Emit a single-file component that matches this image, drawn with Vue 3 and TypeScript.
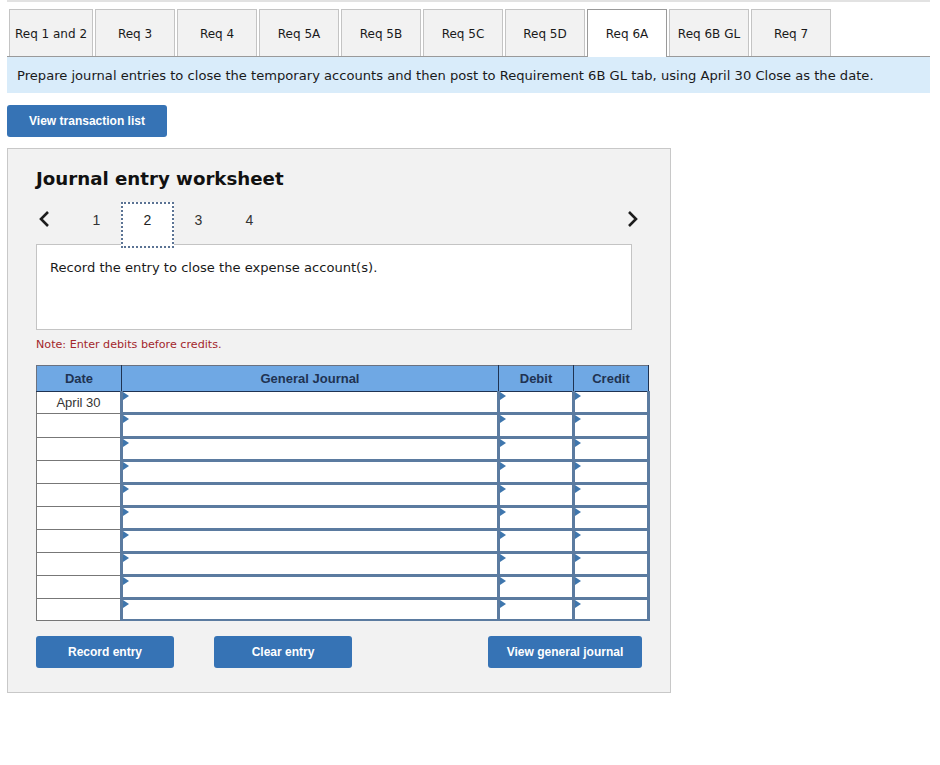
<script setup lang="ts">
const tabs = ['Req 1 and 2', 'Req 3', 'Req 4', 'Req 5A', 'Req 5B', 'Req 5C', 'Req 5D', 'Req 6A', 'Req 6B GL', 'Req 7']
const activeTab = 'Req 6A'
const steps = [1, 2, 3, 4]

// First row carries the date, the other nine are blank
const rows = Array.from({ length: 10 }, (_, i) => (i === 0 ? 'April 30' : ''))
</script>

<template>
  <div class="page">
    <div class="top-strip"></div>

    <div class="tabs">
      <div
        v-for="(tab, i) in tabs"
        :key="tab"
        class="tab"
        :class="{ active: tab === activeTab, first: i === 0 }"
      >
        {{ tab }}
      </div>
    </div>

    <div class="instruction">
      Prepare journal entries to close the temporary accounts and then post to Requirement 6B GL tab, using April 30 Close as the date.
    </div>

    <button class="btn btn-list">View transaction list</button>

    <div class="panel">
      <h2 class="title">Journal entry worksheet</h2>

      <div class="stepper">
        <svg class="chevron" width="12" height="18" viewBox="0 0 12 18">
          <path d="M10 2 L3 9 L10 16" fill="none" stroke="#1c1c1c" stroke-width="2.6" />
        </svg>
        <div class="steps">
          <div v-for="s in steps" :key="s" class="step" :class="{ current: s === 2 }">{{ s }}</div>
        </div>
        <svg class="chevron next" width="12" height="18" viewBox="0 0 12 18">
          <path d="M2 2 L9 9 L2 16" fill="none" stroke="#1c1c1c" stroke-width="2.6" />
        </svg>
      </div>

      <div class="prompt">Record the entry to close the expense account(s).</div>

      <div class="note">Note: Enter debits before credits.</div>

      <table class="journal">
        <colgroup>
          <col class="col-date" />
          <col class="col-desc" />
          <col class="col-num" />
          <col class="col-num" />
        </colgroup>
        <thead>
          <tr>
            <th>Date</th>
            <th>General Journal</th>
            <th>Debit</th>
            <th>Credit</th>
          </tr>
        </thead>
        <tbody>
          <tr v-for="(date, i) in rows" :key="i">
            <td class="date">{{ date }}</td>
            <td class="entry"><span class="marker"></span></td>
            <td class="entry"><span class="marker"></span></td>
            <td class="entry"><span class="marker"></span></td>
          </tr>
        </tbody>
      </table>

      <div class="actions">
        <button class="btn btn-action">Record entry</button>
        <button class="btn btn-action btn-clear">Clear entry</button>
        <button class="btn btn-journal">View general journal</button>
      </div>
    </div>
  </div>
</template>

<style>
html,
body {
  background: #fff;
}
</style>

<style scoped>
.page {
  width: 940px;
  height: 765px;
  box-sizing: border-box;
  padding: 0 10px 0 7px;
  font-family: "DejaVu Sans", Verdana, sans-serif;
  color: #1a1a1a;
}

.top-strip {
  height: 2px;
  background: #e2e2e2;
}

.tabs {
  display: flex;
  gap: 2px;
  padding: 7px 0 0 2px;
  height: 47px;
  border-bottom: 1px solid #9a9a9a;
}

.tab {
  width: 80px;
  height: 47px;
  box-sizing: border-box;
  display: flex;
  align-items: center;
  justify-content: center;
  padding-top: 1px;
  background: #f2f2f2;
  border: 1px solid #c4c4c4;
  border-bottom: none;
  font-size: 12px;
  white-space: nowrap;
}

.tab.first {
  width: 84px;
}

.tab.active {
  height: 48px;
  padding-top: 0;
  background: #fff;
  border-color: #9a9a9a;
  position: relative;
}

.instruction {
  height: 36px;
  display: flex;
  align-items: center;
  padding-left: 10px;
  background: #d9ecfa;
  font-size: 13.1px;
  white-space: nowrap;
}

.btn {
  display: block;
  border: none;
  border-radius: 3px;
  background: #3673b5;
  color: #fff;
  font-family: "Liberation Sans", Arial, sans-serif;
  font-size: 12px;
  font-weight: 700;
  padding: 0;
}

.btn-list {
  width: 160px;
  height: 32px;
  margin-top: 12px;
}

.panel {
  width: 664px;
  height: 545px;
  box-sizing: border-box;
  margin-top: 11px;
  padding: 0 0 0 28px;
  background: #f2f2f2;
  border: 1px solid #c8c8c8;
}

.title {
  margin: 18px 0 0;
  font-size: 18.2px;
  line-height: 24px;
  font-weight: 700;
  color: #111;
}

.stepper {
  width: 596px;
  height: 46px;
  margin-top: 11px;
  display: flex;
  align-items: center;
  position: relative;
  z-index: 1;
}

.chevron {
  margin: -12px 0 0 2px;
  flex: none;
}

.chevron.next {
  margin-left: auto;
  margin-right: -7px;
}

.steps {
  display: flex;
  margin-left: 21px;
  margin-right: auto;
  font-family: "Liberation Sans", Arial, sans-serif;
  font-size: 14px;
  color: #333;
}

.step {
  width: 51px;
  height: 46px;
  box-sizing: border-box;
  display: flex;
  align-items: center;
  justify-content: center;
  padding-bottom: 11px;
}

.step.current {
  width: 53px;
  margin: 0 -1px;
  background: #fff;
  border: 2px dotted #5b7394;
  padding-bottom: 11px;
  color: #222;
}

.prompt {
  width: 596px;
  height: 86px;
  box-sizing: border-box;
  margin-top: -4px;
  padding: 14px 13px;
  background: #fff;
  border: 1px solid #c4c4c4;
  font-size: 13.1px;
  line-height: 17px;
}

.note {
  margin-top: 7px;
  font-size: 11.15px;
  line-height: 15px;
  color: #a3262b;
}

.journal {
  margin-top: 13px;
  width: 612px;
  table-layout: fixed;
  border-collapse: collapse;
  font-family: "Liberation Sans", Arial, sans-serif;
  font-size: 13px;
}

.col-date {
  width: 85px;
}

.col-desc {
  width: 377px;
}

.col-num {
  width: 75px;
}

.journal th {
  height: 25px;
  padding: 0;
  background: #6fa8e4;
  border: 1px solid #1f3352;
  border-top-color: #6b7280;
  border-left-color: #6b7280;
  font-weight: 700;
  color: #1f3352;
}

.journal td {
  height: 20px;
  padding: 0;
  background: #fff;
}

/* second row sits one pixel taller in the source table */
.journal tbody tr:nth-child(2) td {
  height: 21px;
}

.journal tbody tr:last-child td {
  height: 19px;
}

.date {
  border: 1px solid #777;
  text-align: center;
  color: #333;
}

.entry {
  position: relative;
  border: 3px solid #5b7ba0;
}

.journal tbody tr:first-child .entry {
  border-top: 1px solid #1f3352;
}

.journal tbody tr:last-child .entry {
  border-bottom-width: 2px;
}

.marker {
  position: absolute;
  left: 0;
  top: 0;
  width: 0;
  height: 0;
  border-top: 4px solid transparent;
  border-bottom: 4px solid transparent;
  border-left: 6px solid #3f76ad;
}

.actions {
  width: 606px;
  display: flex;
  margin-top: 15px;
}

.btn-action {
  width: 138px;
  height: 32px;
}

.btn-clear {
  margin-left: 40px;
}

.btn-journal {
  width: 154px;
  height: 32px;
  margin-left: auto;
}
</style>
